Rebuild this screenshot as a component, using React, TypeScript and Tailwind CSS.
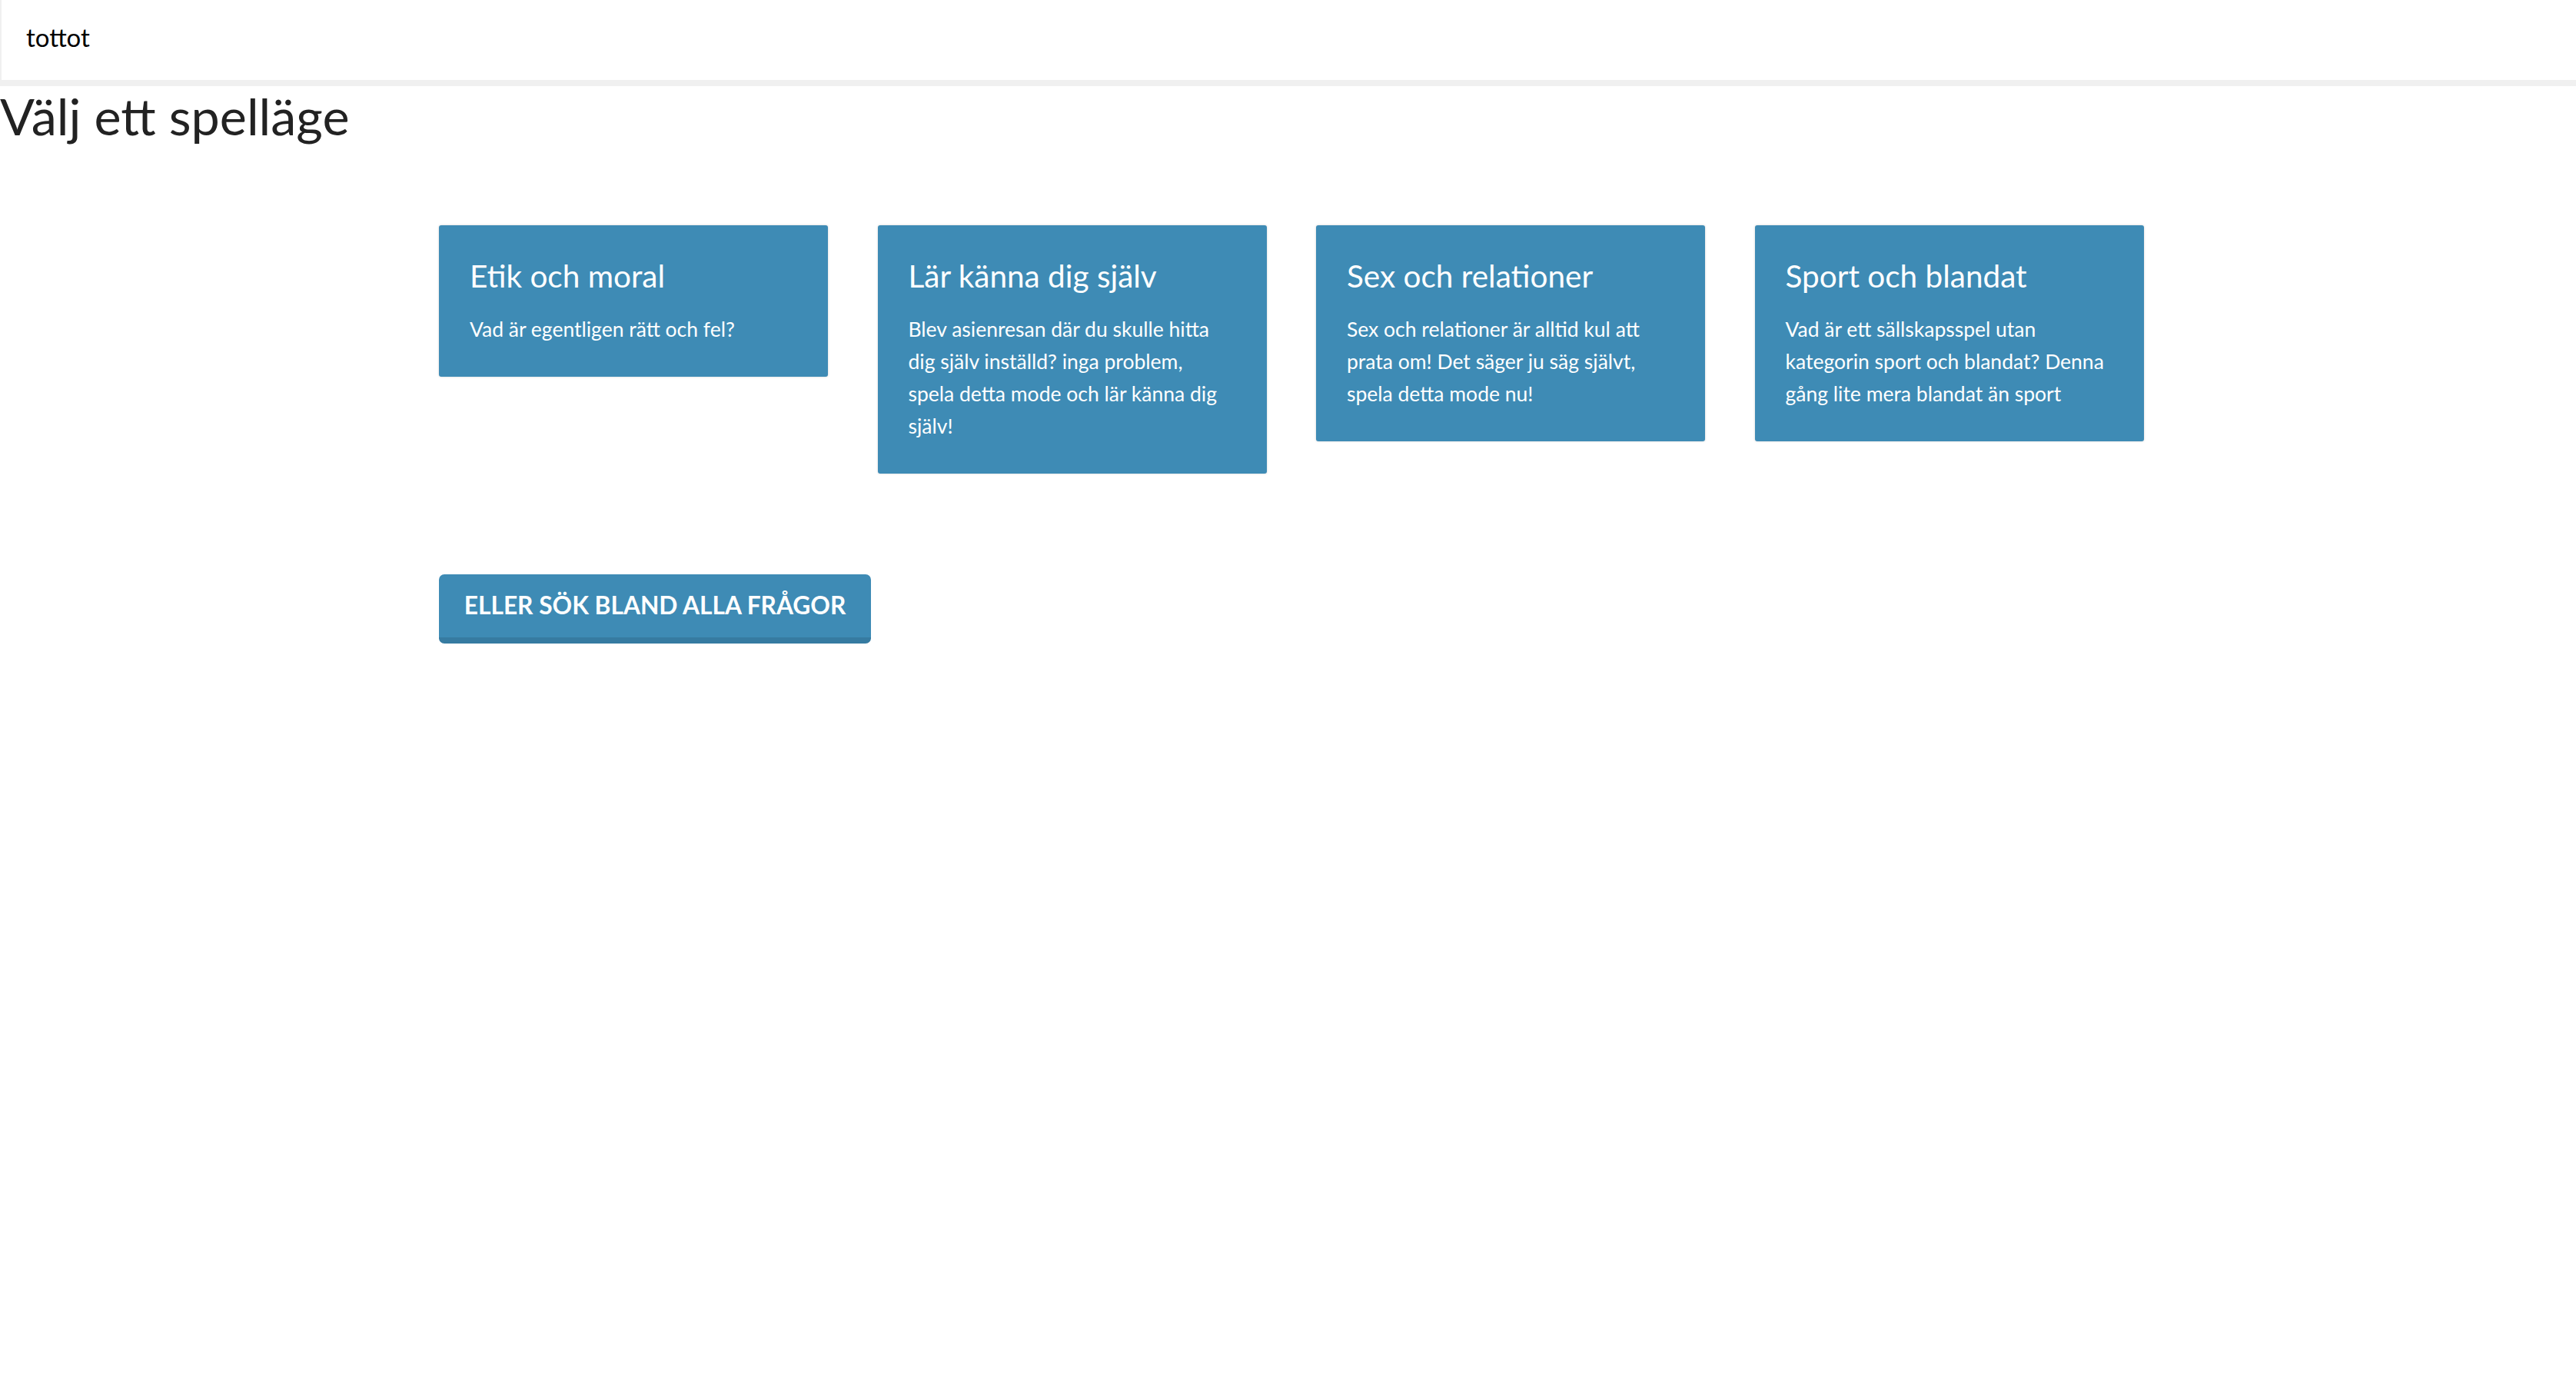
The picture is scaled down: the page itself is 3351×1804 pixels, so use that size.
import React from "react";

const modes = [
  { title: "Etik och moral", text: "Vad är egentligen rätt och fel?" },
  {
    title: "Lär känna dig själv",
    text: "Blev asienresan där du skulle hitta dig själv inställd? inga problem, spela detta mode och lär känna dig själv!",
  },
  {
    title: "Sex och relationer",
    text: "Sex och relationer är alltid kul att prata om! Det säger ju säg självt, spela detta mode nu!",
  },
  {
    title: "Sport och blandat",
    text: "Vad är ett sällskapsspel utan kategorin sport och blandat? Denna gång lite mera blandat än sport",
  },
];

const ModeCard = ({ title, text }: { title: string; text: string }) => {
  return (
    <div className="w-[506px] bg-[#3e8bb5] rounded-[3px] pl-[40px] pr-[46px] pt-[44px] pb-[41px] text-white shadow-[0_0_3px_rgba(0,0,0,0.18)] cursor-pointer">
      <h3 className="text-[40.5px] leading-[1.1] mb-[25px]">{title}</h3>
      <p className="text-[26.5px] leading-[42px]">{text}</p>
    </div>
  );
};

const App = () => {
  return (
    <div className="min-h-screen bg-white text-[#222] font-['Lato','Open_Sans',sans-serif]">
      <div className="h-[112px] border-l-2 border-b-[8px] border-[#f0f0f0] bg-white flex items-center pl-[32px] pb-[6px]">
        <span className="text-[33px] text-black">tottot</span>
      </div>
      <h1 className="text-[66.5px] leading-[1.1] mt-[2px]">Välj ett spelläge</h1>
      <div className="ml-[571px] mt-[106px]">
        <div className="flex items-start gap-[64.5px]">
          {modes.map((m) => (
            <ModeCard key={m.title} title={m.title} text={m.text} />
          ))}
        </div>
        <button className="mt-[131px] w-[562px] h-[90px] rounded-[7px] bg-[#3e8bb5] border-b-[8px] border-[#367ba1] text-white font-bold text-[31.7px] uppercase whitespace-nowrap">
          Eller sök bland alla frågor
        </button>
      </div>
    </div>
  );
};

export default App;
